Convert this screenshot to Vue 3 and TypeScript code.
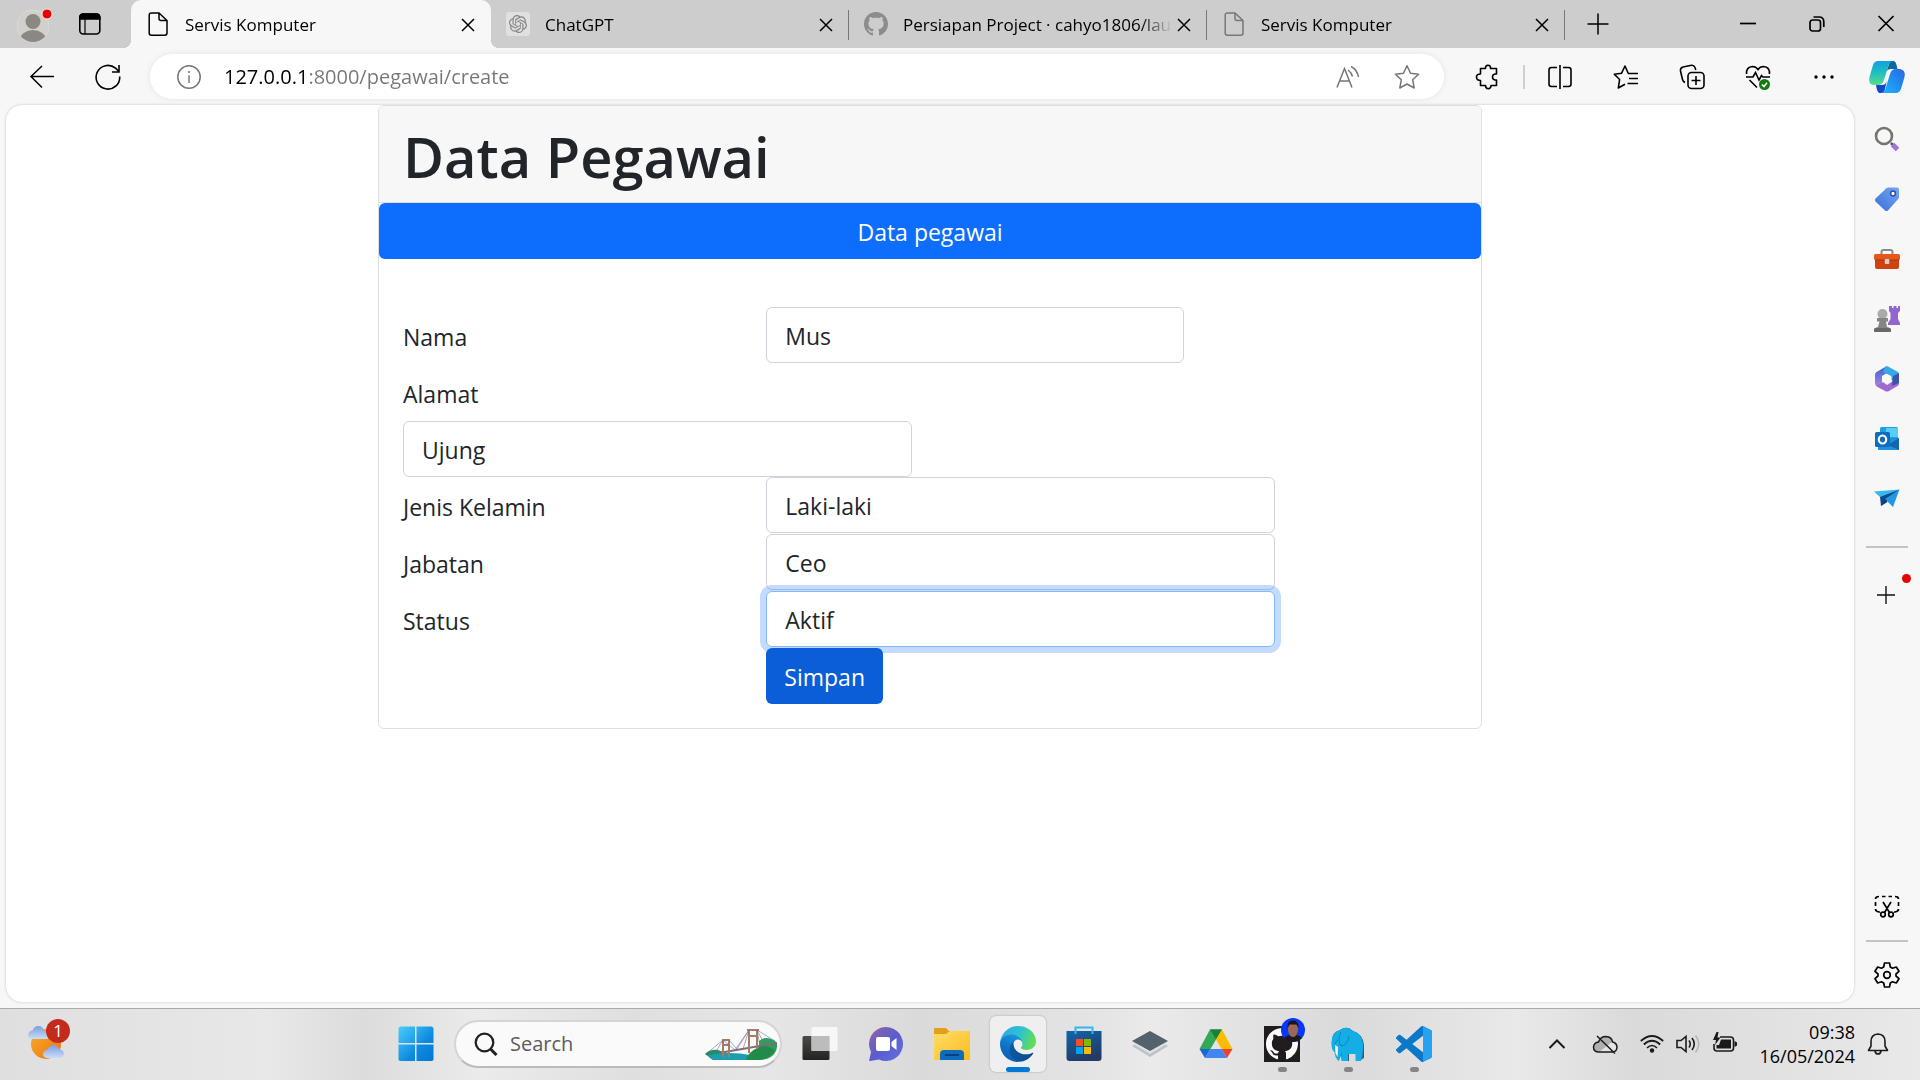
<script setup lang="ts">
import { ref } from 'vue'

interface Tab {
  title: string
  icon: 'file' | 'chat' | 'github'
}

interface Field {
  id: string
  label: string
  value: string
  size: 'five' | 'six'
  stacked?: boolean
  focused?: boolean
}

const tabs: Tab[] = [
  { title: 'Servis Komputer', icon: 'file' },
  { title: 'ChatGPT', icon: 'chat' },
  { title: 'Persiapan Project · cahyo1806/lau', icon: 'github' },
  { title: 'Servis Komputer', icon: 'file' },
]
const activeTab = ref(0)
const address = ref('127.0.0.1:8000/pegawai/create')
const query = ref('')

const fields = ref<Field[]>([
  { id: 'nama', label: 'Nama', value: 'Mus', size: 'five' },
  { id: 'alamat', label: 'Alamat', value: 'Ujung', size: 'six', stacked: true },
  { id: 'jenis', label: 'Jenis Kelamin', value: 'Laki-laki', size: 'six' },
  { id: 'jabatan', label: 'Jabatan', value: 'Ceo', size: 'six' },
  { id: 'status', label: 'Status', value: 'Aktif', size: 'six', focused: true },
])

const githubMark =
  'M8 0C3.58 0 0 3.58 0 8c0 3.54 2.29 6.53 5.47 7.59.4.07.55-.17.55-.38 0-.19-.01-.82-.01-1.49-2.01.37-2.53-.49-2.69-.94-.09-.23-.48-.94-.82-1.13-.28-.15-.68-.52-.01-.53.63-.01 1.08.58 1.23.82.72 1.21 1.87.87 2.33.66.07-.52.28-.87.51-1.07-1.78-.2-3.64-.89-3.64-3.95 0-.87.31-1.59.82-2.15-.08-.2-.36-1.02.08-2.12 0 0 .67-.21 2.2.82.64-.18 1.32-.27 2-.27.68 0 1.36.09 2 .27 1.53-1.04 2.2-.82 2.2-.82.44 1.1.16 1.92.08 2.12.51.56.82 1.27.82 2.15 0 3.07-1.87 3.75-3.65 3.95.29.25.54.73.54 1.48 0 1.07-.01 1.93-.01 2.2 0 .21.15.46.55.38A8.013 8.013 0 0016 8c0-4.42-3.58-8-8-8z'
</script>

<template>
  <div class="desktop">
    <header class="tabstrip">
      <div class="corner">
        <button class="plain" aria-label="Profile">
          <svg width="40" height="40" viewBox="0 0 40 40">
            <defs><clipPath id="face"><circle cx="20" cy="22" r="16" /></clipPath></defs>
            <circle cx="20" cy="22" r="16" fill="#d3d0cb" stroke="#dcdad6" />
            <g clip-path="url(#face)" fill="#8b8782"><circle cx="20" cy="17.500" r="7.500" /><ellipse cx="20" cy="36" rx="13" ry="10" /></g>
            <circle cx="34" cy="10" r="5" fill="#e60000" stroke="#f5e3e3" />
          </svg>
        </button>
        <button class="plain" aria-label="Tab actions">
          <svg width="24" height="24" viewBox="0 0 24 24" fill="none" stroke="#000" stroke-width="1.600">
            <rect x="1.800" y="2" width="20" height="20" rx="3.500" /><path d="M1.800 7V5.500Q1.800 2 5.300 2H18.300Q21.800 2 21.800 5.500V7Z" fill="#000" /><path d="M7 7V22" stroke-width="1.200" />
          </svg>
        </button>
      </div>
      <div class="tabs" role="tablist">
        <div v-for="(tab, i) in tabs" :key="i" class="tab" :class="{ active: i === activeTab }" role="tab" :aria-selected="i === activeTab">
          <svg v-if="tab.icon === 'file'" class="favicon" viewBox="0 0 24 24" fill="none" :stroke="i === activeTab ? '#000' : '#777'" stroke-width="1.500">
            <path d="M5.500 1H13L21 8.500V21Q21 23.200 18.800 23.200H5.500Q3.200 23.200 3.200 21V3.200Q3.200 1 5.500 1ZM13 1V6.500Q13 8.500 15 8.500H21" />
          </svg>
          <svg v-else-if="tab.icon === 'chat'" class="favicon" viewBox="0 0 24 24">
            <rect width="24" height="24" rx="3" fill="#e0e0e0" />
            <path transform="translate(3 3) scale(.75)" fill="#858585" d="M22.282 9.821a5.985 5.985 0 0 0-.516-4.91 6.046 6.046 0 0 0-6.51-2.9A6.065 6.065 0 0 0 4.981 4.182a5.985 5.985 0 0 0-3.998 2.9 6.046 6.046 0 0 0 .743 7.097 5.98 5.98 0 0 0 .511 4.91 6.051 6.051 0 0 0 6.515 2.9A5.985 5.985 0 0 0 13.26 24a6.056 6.056 0 0 0 5.772-4.206 5.989 5.989 0 0 0 3.998-2.9 6.056 6.056 0 0 0-.748-7.073zm-9.022 12.608a4.476 4.476 0 0 1-2.876-1.04l.141-.081 4.779-2.758a.795.795 0 0 0 .392-.681v-6.737l2.02 1.168a.071.071 0 0 1 .038.052v5.583a4.504 4.504 0 0 1-4.494 4.494zm-9.66-4.125a4.471 4.471 0 0 1-.535-3.014l.142.085 4.783 2.759a.771.771 0 0 0 .78 0l5.843-3.369v2.332a.08.08 0 0 1-.033.062L9.74 19.95a4.499 4.499 0 0 1-6.14-1.646zM2.34 7.896a4.485 4.485 0 0 1 2.366-1.973V11.6a.766.766 0 0 0 .388.677l5.814 3.354-2.02 1.169a.076.076 0 0 1-.071 0l-4.83-2.787A4.504 4.504 0 0 1 2.34 7.872zm16.597 3.855-5.833-3.387L15.119 7.2a.076.076 0 0 1 .071 0l4.83 2.791a4.494 4.494 0 0 1-.676 8.105v-5.678a.79.79 0 0 0-.407-.667zm2.01-3.023-.141-.085-4.774-2.782a.776.776 0 0 0-.785 0L9.409 9.23V6.897a.066.066 0 0 1 .028-.061l4.83-2.787a4.499 4.499 0 0 1 6.68 4.66zM8.307 12.863l-2.02-1.164a.08.08 0 0 1-.038-.057V6.075a4.499 4.499 0 0 1 7.375-3.453l-.142.08L8.704 5.46a.795.795 0 0 0-.393.681zm1.097-2.365 2.602-1.5 2.607 1.5v2.999l-2.597 1.5-2.607-1.5z" />
          </svg>
          <svg v-else class="favicon" viewBox="0 0 16 16"><path :d="githubMark" fill="#8c8c8c" /></svg>
          <span class="tab-title">{{ tab.title }}</span>
          <button class="plain close" aria-label="Close tab">
            <svg width="24" height="24" viewBox="0 0 24 24" stroke="#000" stroke-width="1.500"><path d="M6 7L18 19M18 7L6 19" /></svg>
          </button>
        </div>
      </div>
      <button class="plain newtab" aria-label="New tab">
        <svg width="22" height="22" viewBox="0 0 22 22" stroke="#000" stroke-width="1.500"><path d="M11 .500V21.500M.500 11H21.500" /></svg>
      </button>
      <div class="window-controls">
        <button class="plain" aria-label="Minimise"><svg width="20" height="20" viewBox="0 0 20 20" stroke="#000" stroke-width="1.700"><path d="M2 9.500H18" /></svg></button>
        <button class="plain" aria-label="Restore"><svg width="20" height="20" viewBox="0 0 20 20" fill="none" stroke="#000" stroke-width="1.700"><rect x="3" y="6" width="10.500" height="11" rx="2.500" /><path d="M6.500 3H12Q16.800 3 16.800 8V13" /></svg></button>
        <button class="plain" aria-label="Close"><svg width="20" height="20" viewBox="0 0 20 20" stroke="#000" stroke-width="1.700"><path d="M2.500 2L17.500 17M17.500 2L2.500 17" /></svg></button>
      </div>
    </header>

    <nav class="toolbar">
      <button class="plain nav" aria-label="Back"><svg width="26" height="26" viewBox="0 0 26 26" fill="none" stroke="#000" stroke-width="1.500"><path d="M25 12.500H2M13 2L2 12.500L13 23.500" /></svg></button>
      <button class="plain nav" aria-label="Refresh"><svg width="26" height="26" viewBox="0 0 26 26" fill="none" stroke="#000" stroke-width="1.600"><path d="M24.700 12.500A11.800 11.800 0 1 1 20.500 4.200L24 7.500M24 1V8H17" /></svg></button>
      <div class="address">
        <svg width="26" height="26" viewBox="0 0 26 26" fill="none" stroke="#767676" stroke-width="1.500"><circle cx="13" cy="13" r="11.200" /><path d="M13 11.500V19" /><circle cx="13" cy="8" r="1.100" fill="#767676" stroke="none" /></svg>
        <input v-model="address" class="url" type="text" aria-label="Address" spellcheck="false" />
        <button class="plain" aria-label="Read aloud"><svg width="26" height="26" viewBox="0 0 26 26" fill="none" stroke="#767676" stroke-width="1.500"><path d="M2 23.500L9.500 4.500L17 23.500M4.700 17H14.300M13 6Q16.500 8.500 17.500 12.500M16 2.500Q22.500 6 23.500 13" /></svg></button>
        <button class="plain" aria-label="Add to favourites"><svg width="26" height="26" viewBox="0 0 26 26" fill="none" stroke="#767676" stroke-width="1.500" stroke-linejoin="round"><path d="M13 1.800L16.500 9.200L24.600 10.200L18.700 15.800L20.200 24L13 20L5.800 24L7.300 15.800L1.400 10.200L9.500 9.200Z" /></svg></button>
      </div>
      <div class="tools">
        <button class="plain" aria-label="Extensions"><svg width="26" height="26" viewBox="0 0 26 26" fill="none" stroke="#000" stroke-width="1.600" stroke-linejoin="round"><path d="M5.500 4.500H10.500Q10 1.500 13 1.300Q16 1.500 15.500 4.500H21.500V10H20Q17.500 10.500 17.500 13Q17.500 15.500 20 16H21.500V21.500H16Q16 24.500 13.200 24.700Q10.500 24.500 10.500 21.500H5.500V16.500Q1.500 16.500 1.500 13Q1.500 10 5.500 10Z" /></svg></button>
        <span class="split"></span>
        <button class="plain" aria-label="Split screen"><svg width="26" height="26" viewBox="0 0 26 26" fill="none" stroke="#000" stroke-width="1.600"><path d="M10 3.500H4.500Q2 3.500 2 6V20Q2 22.500 4.500 22.500H10M16 3.500H21.500Q24 3.500 24 6V20Q24 22.500 21.500 22.500H16M13 1V25" /></svg></button>
        <button class="plain" aria-label="Favourites"><svg width="26" height="26" viewBox="0 0 26 26" fill="none" stroke="#000" stroke-width="1.600" stroke-linejoin="round"><path d="M17 9.500H15.300L12 2L8.600 9.200L1.300 10.200L6.600 15.500L5.300 24L12 20.300M16 9.500H25M16 14.500H25M14.500 19.500H25" /></svg></button>
        <button class="plain" aria-label="Collections"><svg width="26" height="26" viewBox="0 0 26 26" fill="none" stroke="#000" stroke-width="1.600"><path d="M6 18.500Q4 17.500 3.500 15.500L1.500 7Q1 4 4 3L12.500 1.300Q15 1 16 3.500L16.800 6" /><rect x="9" y="8.500" width="16" height="16" rx="3.500" /><path d="M17 12V21M12.500 16.500H21.500" /></svg></button>
        <button class="plain" aria-label="Browser essentials"><svg width="26" height="26" viewBox="0 0 26 26" fill="none" stroke="#000" stroke-width="1.600"><path d="M1.500 10Q1 3 7.500 2.500Q11 2.500 13 5.500Q15 2.500 18.500 2.500Q25 3 24.500 10M1 13H8L10.500 8.500L14 16L16.500 11.500L18 13H25M4.500 16L12 23.500" /><circle cx="19.500" cy="20.500" r="5.500" fill="#107c10" stroke="none" /><path d="M17 20.500L19 22.500L22 18.800" stroke="#fff" /></svg></button>
        <button class="plain" aria-label="Settings and more"><svg width="26" height="26" viewBox="0 0 26 26"><circle cx="5" cy="13" r="1.700" /><circle cx="13" cy="13" r="1.700" /><circle cx="21" cy="13" r="1.700" /></svg></button>
      </div>
      <button class="plain copilot" aria-label="Copilot">
        <svg width="38" height="34" viewBox="0 0 38 34">
          <defs>
            <linearGradient id="cpA" x1="0" y1="0" x2="0" y2="1"><stop offset="0" stop-color="#139fe0" /><stop offset=".5" stop-color="#21bfc0" /><stop offset="1" stop-color="#58df88" /></linearGradient>
            <linearGradient id="cpB" x1="1" y1="0" x2="0" y2="1"><stop offset="0" stop-color="#2a66e0" /><stop offset="1" stop-color="#17b9ff" /></linearGradient>
          </defs>
          <path d="M22 1H26Q28 2 28.500 5L29.500 9H23Q19 9 18 13Z" fill="#0a6a9f" />
          <path d="M16 33H11Q9 31 8.500 28L8 25H14Q18 25 19 20Z" fill="#1546d0" />
          <path d="M10 1H25Q21 2 20 7L16 20Q14.500 25 10 25H5Q0 24 1.500 17L5 5Q6.500 1 10 1Z" fill="url(#cpA)" />
          <path d="M28 33H13Q17 32 18 27L22 14Q23.500 9 28 9H32Q38 10 36.500 17L33 29Q31.500 33 28 33Z" fill="url(#cpB)" />
        </svg>
      </button>
    </nav>

    <div class="workspace">
      <main class="page">
        <section class="card">
          <div class="card-header"><h1>Data Pegawai</h1></div>
          <a class="banner" href="#pegawai">Data pegawai</a>
          <form class="card-body" @submit.prevent>
            <div v-for="f in fields" :key="f.id" class="row" :class="{ stacked: f.stacked }">
              <label :for="f.id">{{ f.label }}</label>
              <div class="col" :class="f.size">
                <input :id="f.id" v-model="f.value" type="text" :class="{ focused: f.focused }" />
              </div>
            </div>
            <div class="row actions">
              <div class="col offset"><button class="submit" type="submit">Simpan</button></div>
            </div>
          </form>
        </section>
      </main>

      <aside class="sidebar">
        <div class="side-group">
          <button class="plain side" aria-label="Search"><svg width="28" height="28" viewBox="0 0 28 28" fill="none"><path d="M18 18L21 21" stroke="#555" stroke-width="2.500" /><path d="M19.500 19.500L24.500 24.500" stroke="#a173dc" stroke-width="5" /><circle cx="11" cy="11" r="8" stroke="#77736f" stroke-width="2.600" /></svg></button>
          <button class="plain side" aria-label="Shopping"><svg width="28" height="28" viewBox="0 0 28 28"><defs><linearGradient id="tag" x1="1" y1="0" x2="0" y2="1"><stop offset="0" stop-color="#74a7f5" /><stop offset="1" stop-color="#3b6ed8" /></linearGradient></defs><path d="M15 2.500H24Q26 2.500 26 4.500V13L15 25.500Q13.500 26.500 12 25.500L2.500 16.500Q1.500 15 2.500 13.500L13.500 3.300Z" fill="url(#tag)" /><circle cx="20" cy="8.500" r="2.400" fill="#fff" stroke="#2a4fa5" stroke-width="1.500" /></svg></button>
          <button class="plain side" aria-label="Tools"><svg width="28" height="28" viewBox="0 0 28 28"><path d="M8.500 10V7Q8.500 5 10.500 5H17.500Q19.500 5 19.500 7V10" fill="none" stroke="#8a8a8a" stroke-width="2" /><rect x="2" y="11" width="24" height="13" rx="2" fill="#cf4310" /><rect x="1" y="9" width="26" height="6" rx="1.500" fill="#e6571c" /><path d="M2 15H26" stroke="#a9370c" /><rect x="11.800" y="14" width="4.500" height="5" rx=".800" fill="#d0d0d0" /></svg></button>
          <button class="plain side" aria-label="Games"><svg width="28" height="28" viewBox="0 0 28 28"><path d="M16 1H19V3H20.500V1H23.500V3H25V1H27V6L25 8V14L27 18V20H15V18L17.500 14V8L16 6Z" fill="#9366ce" /><circle cx="9.500" cy="9" r="5" fill="#aaa" /><path d="M4 13H15V16.500H13L14 22Q18 22.500 18 26V27H1V26Q1 22.500 5 22L6.500 16.500H4Z" fill="#858585" /><rect x="1" y="23" width="17" height="4" rx="1.500" fill="#686868" /></svg></button>
          <button class="plain side" aria-label="Microsoft 365"><svg width="28" height="28" viewBox="0 0 28 28"><defs><linearGradient id="msA" x1="0" y1="0" x2="0" y2="1"><stop offset="0" stop-color="#3263c7" /><stop offset="1" stop-color="#b98be8" /></linearGradient></defs><path d="M14 1L3.500 7Q2 8 2 10V18.500Q2 20 3.500 21L9 24V11L14 8Z" fill="url(#msA)" /><path d="M12 2Q14 .500 16 2L25 7Q26 8 26 10V19L18 15V11L10 7Z" fill="#35a9e8" /><path d="M26 18.500Q26 20 24.500 21L16 26Q14 27 12 26L3 21L10 17L14 20L20 16Z" fill="#a06bd0" /><path d="M20 11L26 8V18L19 21Z" fill="#4153a8" /><path d="M14 9L18.500 11.500V16.500L14 19L9.500 16.500V11.500Z" fill="#f7f7f7" /></svg></button>
          <button class="plain side" aria-label="Outlook"><svg width="28" height="28" viewBox="0 0 28 28" fill="none"><rect x="7" y="2" width="18" height="15" rx="1.500" fill="#1aa0e6" /><path d="M13 3H25V12H13Z" fill="#56cef9" /><path d="M5 13L26 13V24Q26 25 25 25H6Q5 25 5 24Z" fill="#1d8fdd" /><path d="M26 13L15 20L26 25Z" fill="#1565ad" /><rect x="2" y="7" width="15" height="15" rx="1.500" fill="#0f6cbd" /><ellipse cx="9.500" cy="14.500" rx="3.700" ry="4" stroke="#fff" stroke-width="2.200" /></svg></button>
          <button class="plain side" aria-label="Drop"><svg width="28" height="28" viewBox="0 0 28 28"><path d="M1 6.500L26.500 4.500L8 13Z" fill="#35b8ee" /><path d="M7 12L26.500 4.500L8 21Z" fill="#0a4a8c" /><path d="M12 14L26.500 4.500L20 22Z" fill="#2398e0" /><path d="M8 21L12 14L14.500 17Z" fill="#103d77" /></svg></button>
          <hr />
          <button class="plain side add" aria-label="Customise"><svg width="28" height="28" viewBox="0 0 28 28" stroke="#111" stroke-width="1.400"><path d="M13 5V23M4 14H22" /></svg><i class="dot"></i></button>
        </div>
        <div class="side-group bottom">
          <button class="plain side" aria-label="Screenshot"><svg width="28" height="28" viewBox="0 0 28 28" fill="none" stroke="#000" stroke-width="1.700"><path d="M7 19H6Q2.500 18.500 2.500 16M2.500 13V9M2.500 6Q2.500 3.500 6 3.500M9 3.500H12.500M15.500 3.500H19M22 3.500Q25.500 3.500 25.500 6M25.500 9V13M25.500 16Q25.500 18.500 22 19H21M10 9L16.500 19.500M18 9L11.500 19.500" /><circle cx="10" cy="21.500" r="2.300" /><circle cx="18" cy="21.500" r="2.300" /></svg></button>
          <hr />
          <button class="plain side" aria-label="Settings"><svg width="28" height="28" viewBox="0 0 28 28" fill="none" stroke="#000" stroke-width="1.700" stroke-linejoin="round"><path d="M11.500 2H16.500L17.300 6L19.500 7.200L23.300 6L26 10.300L23 13V15L26 17.700L23.300 22L19.500 20.800L17.300 22L16.500 26H11.500L10.700 22L8.500 20.800L4.700 22L2 17.700L5 15V13L2 10.300L4.700 6L8.500 7.200L10.700 6Z" /><circle cx="14" cy="14" r="3.300" /></svg></button>
        </div>
      </aside>
    </div>

    <footer class="taskbar">
      <button class="plain widget" aria-label="Weather">
        <svg width="44" height="44" viewBox="0 0 44 44">
          <defs><linearGradient id="sun" x1="0" y1="0" x2="1" y2="1"><stop offset="0" stop-color="#f3b12c" /><stop offset="1" stop-color="#f0700c" /></linearGradient><linearGradient id="cloud" x1="0" y1="0" x2="0" y2="1"><stop offset="0" stop-color="#7b9fe0" /><stop offset="1" stop-color="#c9dcfa" /></linearGradient></defs>
          <circle cx="22" cy="22" r="15" fill="url(#sun)" />
          <path d="M8 17Q4 16.500 4 13Q4.500 8.500 8.500 8.500Q10 4 14 4Q19 4 20 9Q24 10 24 17Z" fill="url(#cloud)" />
          <path d="M23 36Q19 35.500 19 32Q19.500 28 23.500 28Q25 23 29.500 23Q34 23 35 27.500Q40 27.500 40 32Q39.500 35.500 36 36Z" fill="url(#cloud)" />
        </svg>
        <span class="badge">1</span>
      </button>

      <div class="launcher">
        <button class="app" aria-label="Start"><svg width="36" height="36" viewBox="0 0 36 36"><defs><linearGradient id="win" gradientUnits="userSpaceOnUse" x1="0" y1="0" x2="36" y2="36"><stop offset="0" stop-color="#4bd0ff" /><stop offset=".6" stop-color="#0d8ae0" /><stop offset="1" stop-color="#0078d4" /></linearGradient></defs><path d="M2 .500H17V17H.500V2ZM18.500 .500H34L35.500 2V17H18.500ZM.500 18.500H17V35H2L.500 34ZM18.500 18.500H35.500V34L34 35H18.500Z" fill="url(#win)" /></svg></button>
        <label class="search">
          <svg width="24" height="24" viewBox="0 0 24 24" fill="none" stroke="#222" stroke-width="2.300"><circle cx="10.500" cy="10.500" r="8.800" /><path d="M16.500 17L22.500 23" stroke-width="3" /></svg>
          <input v-model="query" type="search" placeholder="Search" aria-label="Search" />
          <svg width="72" height="34" viewBox="0 0 72 34">
            <path d="M0 27Q5 22 13 23L24 27V33H8Z" fill="#258b62" /><path d="M3 28Q26 24 45 28V33H12Q5 33 3 28Z" fill="#199fb0" />
            <path d="M54 14Q60 9 66 12Q73 14 72 20Q70 34 50 33H41Q43 25 54 22Z" fill="#2d9f5c" /><path d="M54 20Q61 16 70 24Q62 34 50 33H41Q43 25 54 20Z" fill="#238b4a" />
            <path d="M14 26L72 16" stroke="#806b79" stroke-width="2" />
            <path d="M18 30V13M24 30V13M17 13H25M44 26V3M52 22V3M42 3H54M44 9H52M18 18H24" stroke="#a67d62" stroke-width="2" fill="none" />
            <path d="M1 27L18 13L30 23L44 3L38 22M24 13L32 22M52 3L60 18M52 3L70 14M18 13L10 26M44 3L32 22M52 3L55 19" stroke="#746f93" stroke-width=".600" fill="none" />
          </svg>
        </label>
        <button class="app" aria-label="Task view"><svg width="36" height="36" viewBox="0 0 36 36"><defs><linearGradient id="tv" x1="0" y1="0" x2="0" y2="1"><stop offset="0" stop-color="#4a4a47" /><stop offset="1" stop-color="#222" /></linearGradient></defs><rect x=".500" y="10" width="27" height="24" rx="1.500" fill="url(#tv)" /><rect x="9.500" y="1" width="26" height="24" rx="1" fill="#fafafa" fill-opacity=".85" /><path d="M9.500 10H27.500V25H9.500Z" fill="#bcbcbc" /></svg></button>
        <button class="app" aria-label="Chat"><svg width="36" height="36" viewBox="0 0 36 36"><defs><linearGradient id="chat" x1="0" y1="0" x2="1" y2="1"><stop offset="0" stop-color="#9565a3" /><stop offset=".5" stop-color="#5b5cce" /><stop offset="1" stop-color="#6370e0" /></linearGradient></defs><path d="M18 1A17 17 0 1 1 11 33.500L2 35Q.500 35 1.500 33L3 26A17 17 0 0 1 18 1Z" fill="url(#chat)" /><rect x="8" y="11" width="14" height="14" rx="2" fill="#fff" /><path d="M23.500 16L28.500 12V24L23.500 20Z" fill="#fff" /></svg></button>
        <button class="app" aria-label="File Explorer"><svg width="36" height="36" viewBox="0 0 36 36"><defs><linearGradient id="fold" x1="0" y1="0" x2="1" y2="1"><stop offset="0" stop-color="#ffdd6a" /><stop offset="1" stop-color="#fbbc1c" /></linearGradient></defs><path d="M0 3Q0 2 1 2H12L15 5H35V9H0Z" fill="#e0a01b" /><path d="M0 8H12L16 5H35Q36 5 36 6V34H0Z" fill="url(#fold)" /><path d="M6 34V28Q6 24 10 24H26Q30 24 30 28V34Z" fill="#0f6cbd" /><path d="M11 29H25" stroke="#07427f" stroke-width="2" /></svg></button>
        <button class="app current" aria-label="Microsoft Edge"><svg width="36" height="36" viewBox="0 0 256 256">
          <defs>
            <linearGradient id="eA" x1="0" y1="0" x2="1" y2="0"><stop offset="0" stop-color="#0c59a4" /><stop offset="1" stop-color="#114a8b" /></linearGradient>
            <linearGradient id="eB" x1=".7" y1="0" x2=".3" y2="1"><stop offset="0" stop-color="#1b9de2" /><stop offset=".5" stop-color="#0f76c8" /><stop offset="1" stop-color="#0b5cb0" /></linearGradient>
            <linearGradient id="eC" x1="0" y1=".3" x2="1" y2=".6"><stop offset="0" stop-color="#35a5e8" /><stop offset=".5" stop-color="#2bc3d2" /><stop offset="1" stop-color="#66e04a" /></linearGradient>
          </defs>
          <path d="M231 190.500c-3.400 1.800-6.900 3.400-10.500 4.700a101.900 101.900 0 0 1-35.900 6.400c-47.300 0-88.500-32.500-88.500-74.300 0-11.400 6.400-21.900 16.400-27.300-42.800 1.800-53.800 46.400-53.800 72.500 0 73.900 68.100 81.400 82.800 81.400 7.900 0 19.800-2.300 27-4.600l1.300-.400a128.300 128.300 0 0 0 66.600-52.800 4 4 0 0 0-5.400-5.600z" fill="url(#eA)" />
          <path d="M105.700 241.400a79.200 79.200 0 0 1-22.700-21.300 80.700 80.700 0 0 1 29.500-120c3.200-1.500 8.500-4.100 15.600-4a32.400 32.400 0 0 1 25.700 13 31.900 31.900 0 0 1 6.300 18.700c0-.200 24.500-79.600-80-79.600-43.900 0-80 41.700-80 78.200 0 19.300 4.300 38.600 12.600 56.100a128 128 0 0 0 156.400 67.100 75.500 75.500 0 0 1-63.300-8.200z" fill="url(#eB)" />
          <path d="M152.300 148.900c-.800 1-3.300 2.500-3.300 5.700 0 2.600 1.700 5.100 4.700 7.200 14.400 10 41.500 8.700 41.600 8.700 10.700 0 21.100-2.900 30.300-8.300A61.400 61.400 0 0 0 256 109.200c.300-22.400-8-37.300-11.300-43.900C223.500 23.900 177.700 0 128 0A128 128 0 0 0 0 126.200c.500-36.500 36.800-66 80-66 3.500 0 23.500.300 42 10.100 16.300 8.600 24.900 18.900 30.800 29.200 6.200 10.600 7.200 24.100 7.200 29.500 0 5.400-2.700 13.300-7.700 19.900z" fill="url(#eC)" />
        </svg></button>
        <button class="app" aria-label="Microsoft Store"><svg width="36" height="36" viewBox="0 0 36 36"><defs><linearGradient id="store" x1="0" y1="0" x2=".4" y2="1"><stop offset="0" stop-color="#1065ae" /><stop offset="1" stop-color="#243a66" /></linearGradient></defs><path d="M.500 5H35.500V32Q35.500 35 32.500 35H3.500Q.500 35 .500 32Z" fill="url(#store)" /><path d="M9.500 8V1.500H26.500V8" fill="none" stroke="#2fb8f0" stroke-width="2" /><rect x="10" y="13" width="7" height="7" fill="#f25022" /><rect x="18" y="13" width="7" height="7" fill="#7fba00" /><rect x="10" y="21" width="7" height="7" fill="#00a4ef" /><rect x="18" y="21" width="7" height="7" fill="#ffb900" /></svg></button>
        <button class="app" aria-label="Layers"><svg width="36" height="36" viewBox="0 0 36 36"><path d="M0 20L18 10L36 20L18 31Z" fill="#bcc3c7" /><path d="M0 17L18 7L36 17L18 28Z" fill="#dfe2e4" /><path d="M0 15L18 5L36 15L18 25Z" fill="#53626d" /></svg></button>
        <button class="app" aria-label="Google Drive"><svg width="36" height="36" viewBox="0 0 36 36"><path d="M12 3.500H24L18 13.500Z" fill="#188038" /><path d="M12 3.500L1.500 23H12.500L18 13.500Z" fill="#34a853" /><path d="M12 3.500H24L18 13.500Z" fill="#188038" /><path d="M24 3.500L34.500 23H23.500L18 13.500Z" fill="#fbbc04" /><path d="M1.500 23H12.500L7 32Z" fill="#1967d2" /><path d="M12.500 23H23.500L29 32H7Z" fill="#4285f4" /><path d="M23.500 23H34.500L29 32Z" fill="#ea4335" /></svg></button>
        <button class="app open raised" aria-label="GitHub Desktop"><svg width="46" height="44" viewBox="0 0 46 44"><rect x="5" y="8" width="36" height="36" fill="#211d1e" /><path transform="translate(7 10) scale(2)" :d="githubMark" fill="#fff" /><circle cx="34" cy="12" r="12" fill="#0638f5" /><path d="M25 20Q28 16.500 34 17Q40 16.500 43 20Q39 24 34 24Q28 24 25 20Z" fill="#1c1a1e" /><ellipse cx="34" cy="11.500" rx="5" ry="7.500" fill="#9d6853" /><path d="M28.500 10Q28 2.500 34 2.500Q40 2.500 39.500 10L37.500 6.500H30.500Z" fill="#191519" /></svg></button>
        <button class="app open" aria-label="MAMP"><svg width="36" height="36" viewBox="0 0 36 36"><path d="M2 18Q1 6 10 4Q17 -1 23 5Q33 8 34 19V32L29 35H26V28H19V35H12L11 29L8 33L5 26Q2 24 2 18Z" fill="#28637d" /><path d="M1.500 18Q1 7 10 4Q17 -1 22.500 5Q32 7 33 18Q33.500 26 31 35H25.500V28H18V35H11.500V26Q11 32 8.500 35Q5 32 4.500 26Q1.500 24 1.500 18Z" fill="#12aee5" /><path d="M11 6Q7 14 11 20Q18 19 19 10M8 14Q6 15 5 18" fill="none" stroke="#0788bd" /><path d="M5 19L8 21L7.500 31L5.500 27Z" fill="#fff" /></svg></button>
        <button class="app open" aria-label="Visual Studio Code"><svg width="36" height="36" viewBox="0 0 24 24"><path fill="#0b79c9" fill-rule="evenodd" d="M23.150 2.587L18.210.210a1.494 1.494 0 0 0-1.705.290l-9.460 8.630-4.120-3.128a.999.999 0 0 0-1.276.057L.327 7.261A1 1 0 0 0 .326 8.740L3.899 12 .326 15.260a1 1 0 0 0 .001 1.479L1.650 17.940a.999.999 0 0 0 1.276.057l4.120-3.128 9.460 8.630a1.492 1.492 0 0 0 1.704.290l4.942-2.377A1.500 1.500 0 0 0 24 20.060V3.939a1.500 1.500 0 0 0-.850-1.352zm-5.146 14.861L10.826 12l7.178-5.448v10.896z" /><path d="M18 .150L23.150 2.587Q24 3 24 3.939V20.060Q24 21 23.150 21.420L18 23.900Z" fill="#27a1f0" /></svg></button>
      </div>

      <div class="tray">
        <button class="plain" aria-label="Show hidden icons"><svg width="24" height="24" viewBox="0 0 24 24" fill="none" stroke="#1b1b1b" stroke-width="2"><path d="M4.500 16L12 8.500L19.500 16" /></svg></button>
        <button class="plain cloud" aria-label="OneDrive"><svg width="26" height="24" viewBox="0 0 26 24"><path d="M7 20Q1.500 20 1.500 15Q2 10.500 6.500 10Q8.500 4.500 14 4.500Q20 5 20.500 10Q25 11 25 15.500Q24.500 20 20 20Z" fill="#b0b0b0" /><path d="M7 20L20 10Q25 11 25 15.500Q24.500 20 20 20Z" fill="#e5e5e5" /><path d="M7 20Q1.500 20 1.500 15Q2 10.500 6.500 10Q8.500 4.500 14 4.500Q20 5 20.500 10Q25 11 25 15.500Q24.500 20 20 20ZM5 4L23 21.500" fill="none" stroke="#1b1b1b" stroke-width="1.500" /></svg></button>
        <button class="plain status" aria-label="Network, volume and battery">
          <svg width="24" height="24" viewBox="0 0 24 24" fill="none" stroke="#1b1b1b" stroke-width="1.700"><path d="M.800 9Q12-1 23.200 9M3.800 12.500Q12 5 20.200 12.500M7 16Q12 11 17 16" /><circle cx="12" cy="18.500" r="2.200" fill="#1b1b1b" stroke="none" /></svg>
          <svg width="26" height="24" viewBox="0 0 26 24" fill="none" stroke="#1b1b1b" stroke-width="1.600"><path d="M2 8.500H6L11 4.500V19.500L6 15.500H2ZM14 8.500Q16.500 12 14 15.500M17 6Q21.500 12 17 18" /><path d="M20.500 3.500Q27 12 20.500 20.500" stroke="#b5b5b5" /></svg>
          <svg width="26" height="24" viewBox="0 0 26 24"><path d="M8 5H18.500Q21.500 5 21.500 8V16Q21.500 19 18.500 19H5Q2 19 2 16V12" fill="none" stroke="#1b1b1b" stroke-width="1.600" /><path d="M9 7.500H19V16.500H4.500V13H7Z" fill="#1b1b1b" /><path d="M22.500 9L25 10.500V13.500L22.500 15Z" fill="#1b1b1b" /><path d="M4.500 0L1 8H4L3 13L8.500 5.500H5.500L6.500 0Z" fill="#1b1b1b" /></svg>
        </button>
        <button class="plain clock"><span>09:38</span><span>16/05/2024</span></button>
        <button class="plain" aria-label="Notifications"><svg width="24" height="24" viewBox="0 0 24 24" fill="none" stroke="#1b1b1b" stroke-width="1.600" stroke-linejoin="round"><path d="M12 2Q5 2.500 5 9.500V14L2.500 18.500H21.500L19 14V9.500Q19 2.500 12 2ZM9 19Q9.500 22 12 22Q14.500 22 15 19" /></svg></button>
      </div>
    </footer>
  </div>
</template>

<style>
body {
  margin: 0;
  background: #f7f7f7;
}
</style>

<style scoped>
* {
  box-sizing: border-box;
}

.desktop {
  display: flex;
  flex-direction: column;
  min-height: 100vh;
  color: #000;
  font-family: 'Open Sans', 'Noto Sans', sans-serif;
  font-size: 17px;
  background: #f7f7f7;
}

svg {
  display: block;
  flex: none;
}

button,
input {
  font: inherit;
}

.plain {
  display: flex;
  align-items: center;
  justify-content: center;
  padding: 0;
  border: 0;
  color: inherit;
  background: none;
}

/* tab strip */
.tabstrip {
  display: flex;
  height: 48px;
  background: #cdcdcd;
}

.corner {
  display: flex;
  align-items: center;
  flex: none;
  width: 131px;
  padding-left: 13px;
  gap: 25px;
}

.tabs {
  display: flex;
  flex: 0 1 1434px;
  min-width: 0;
}

.tab {
  position: relative;
  display: flex;
  align-items: center;
  flex: 1 1 358px;
  min-width: 0;
  padding: 0 11px 0 15px;
}

.tab:not(.active)::after {
  content: '';
  position: absolute;
  right: 0;
  top: 10px;
  width: 1px;
  height: 30px;
  background: #777;
}

.tab.active {
  flex-basis: 360px;
  border-radius: 10px 10px 0 0;
  background: #f7f7f7;
}

.tab.active::before,
.tab.active::after {
  content: '';
  position: absolute;
  bottom: 0;
  width: 8px;
  height: 8px;
}

.tab.active::before {
  left: -8px;
  background: radial-gradient(circle at 0 0, transparent 8px, #f7f7f7 8px);
}

.tab.active::after {
  right: -8px;
  background: radial-gradient(circle at 100% 0, transparent 8px, #f7f7f7 8px);
}

.favicon {
  width: 24px;
  height: 24px;
}

.tab-title {
  flex: 1;
  min-width: 0;
  margin-left: 15px;
  overflow: hidden;
  white-space: nowrap;
  mask-image: linear-gradient(to left, transparent, #000 32px);
}

.newtab {
  width: 66px;
}

.window-controls {
  display: flex;
  flex: none;
  margin-left: auto;
}

.window-controls button {
  width: 69px;
}

/* toolbar */
.toolbar {
  display: flex;
  align-items: center;
  height: 57px;
  padding-left: 9px;
}

.nav {
  width: 66px;
  height: 40px;
}

.address {
  display: flex;
  align-items: center;
  flex: 1;
  min-width: 0;
  height: 45px;
  margin-left: 9px;
  padding: 0 24px 0 26px;
  gap: 33px;
  border-radius: 23px;
  background: #fff;
  box-shadow: 0 0 6px rgba(0, 0, 0, 0.08);
}

.url {
  flex: 1;
  min-width: 0;
  height: 36px;
  margin-left: -11px;
  padding: 0;
  border: 0;
  outline: 0;
  font-size: 20px;
  color: #767676;
  background: linear-gradient(to right, #000 84px, #767676 84px);
  background-clip: text;
  -webkit-text-fill-color: transparent;
}

.tools {
  display: flex;
  align-items: center;
  flex: none;
  padding-left: 31px;
  gap: 40px;
}

.split {
  width: 2px;
  height: 24px;
  margin: 0 -18px;
  background: #cfcfcf;
}

.copilot {
  flex: none;
  width: 66px;
  margin-left: 17px;
}

/* page and sidebar */
.workspace {
  display: flex;
  flex: 1;
  min-height: 0;
  padding-left: 6px;
}

.page {
  flex: 1;
  min-width: 0;
  margin-bottom: 6px;
  border-radius: 16px;
  background: #fff;
  box-shadow: 0 0 3px rgba(0, 0, 0, 0.2);
}

.card {
  max-width: 1104px;
  margin: 0 auto;
  border: 1px solid #dfdfdf;
  border-radius: 6px;
  color: #212529;
  font-size: 23px;
  line-height: 36px;
}

.card-header {
  padding: 14px 24px 10px;
  border-bottom: 1px solid #dfdfdf;
  border-radius: 5px 5px 0 0;
  background: #f7f7f7;
}

h1 {
  margin: 0;
  font-size: 56px;
  font-weight: 600;
  line-height: 72px;
}

.banner {
  display: block;
  padding: 11px 10px 9px;
  border-radius: 6px;
  color: #fff;
  text-align: center;
  text-decoration: none;
  background: #0d6efd;
}

.card-body {
  padding: 48px 24px 24px;
}

.row {
  display: flex;
  flex-wrap: wrap;
  align-items: flex-start;
  margin: 0 -18px;
  min-height: 57px;
}

.row label {
  width: 33.333%;
  padding: 12px 18px 9px;
}

.row.stacked label {
  width: 100%;
}

.col {
  padding: 0 18px;
}

.five {
  width: 41.667%;
}

.six {
  width: 50%;
}

.offset {
  margin-left: 33.333%;
}

.col input {
  display: block;
  width: 100%;
  height: 56px;
  padding: 1px 18px 0;
  border: 1px solid #ced4da;
  border-radius: 6px;
  outline: 0;
  color: #212529;
  background: #fff;
}

.col .focused {
  position: relative;
  border-color: #86b7fe;
  box-shadow: 0 0 0 6px rgba(13, 110, 253, 0.25);
}

.row.actions {
  min-height: 56px;
}

.submit {
  position: relative;
  display: block;
  height: 56px;
  padding: 1px 18px 0;
  border: 0;
  border-radius: 6px;
  color: #fff;
  background: #0b5ed7;
}

.sidebar {
  display: flex;
  flex-direction: column;
  justify-content: space-between;
  flex: none;
  width: 66px;
  padding: 4px 0 3px;
}

.side-group {
  display: flex;
  flex-direction: column;
}

.side {
  height: 60px;
}

.side.add {
  position: relative;
}

.side-group hr {
  width: 42px;
  height: 2px;
  margin: 17px auto;
  border: 0;
  background: #c4c4c4;
}

.side-group.bottom hr {
  margin: 3px auto;
}

.dot {
  position: absolute;
  right: 9px;
  top: 9px;
  width: 9px;
  height: 9px;
  border-radius: 50%;
  background: #e60000;
}

/* taskbar */
.taskbar {
  display: flex;
  align-items: center;
  height: 72px;
  padding: 0 30px 2px 24px;
  border-top: 1px solid #aaa;
  background: linear-gradient(to right, #dfdfdf, #e8e8e8 14%, #dcdcdc 19%, #ebebeb 25%, #dfdfdf 33%, #e6e6e6 40%, #dadada 48%, #e4e4e4 57%, #eaeaea 60%, #dadada 70%, #e9e9e9 79%, #dadada 85%, #e9e9e9);
}

.widget {
  position: relative;
  flex: 0 1 364px;
  justify-content: flex-start;
}

.badge {
  position: absolute;
  left: 22px;
  top: -3px;
  width: 24px;
  height: 24px;
  border-radius: 50%;
  color: #fff;
  line-height: 24px;
  text-align: center;
  background: #c42b1c;
}

.launcher {
  display: flex;
  align-items: center;
  flex: none;
  gap: 10px;
}

.app {
  position: relative;
  display: flex;
  align-items: center;
  justify-content: center;
  width: 56px;
  height: 56px;
  padding: 0;
  border: 0;
  border-radius: 6px;
  background: none;
}

.app.current {
  background: #efefef;
  box-shadow: 0 0 2px rgba(0, 0, 0, 0.3);
}

.app.raised {
  padding-bottom: 8px;
}

.app.current::after,
.app.open::after {
  content: '';
  position: absolute;
  bottom: 0;
  width: 9px;
  height: 5px;
  border-radius: 3px;
  background: #858585;
}

.app.current::after {
  width: 24px;
  background: #0078d4;
}

.search {
  display: flex;
  align-items: center;
  width: 328px;
  height: 48px;
  padding: 0 3px 0 18px;
  border: 2px solid #d5d5d5;
  border-bottom-color: #bbb;
  border-radius: 24px;
  background: #fafafa;
}

.search input {
  flex: 1;
  min-width: 0;
  padding: 0 0 0 12px;
  border: 0;
  outline: 0;
  font-size: 20px;
  background: none;
}

.search input::placeholder {
  color: #5c5c5c;
}

.tray {
  display: flex;
  align-items: center;
  flex: none;
  margin-left: auto;
}

.cloud {
  margin: 0 22px 0 23px;
}

.status {
  gap: 11px;
}

.clock {
  flex-direction: column;
  align-items: flex-end;
  width: 117px;
  margin-right: 11px;
  font-size: 18px;
  line-height: 24px;
}
</style>
